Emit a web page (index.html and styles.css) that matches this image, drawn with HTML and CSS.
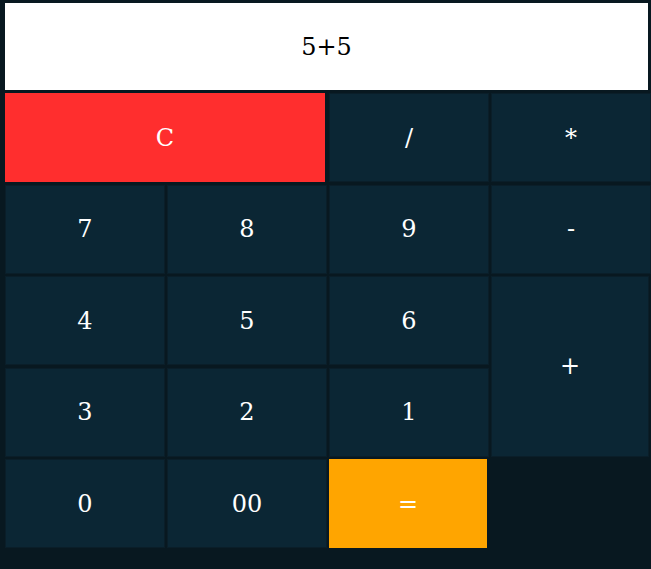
FILE: index.html
```html
<!DOCTYPE html>
<html>
<head>
<meta charset="utf-8">
<link rel="stylesheet" href="styles.css">
</head>
<body>
<div class="calc">
  <div class="display">5+5</div>
  <div class="keys">
    <div class="key clear span2">C</div>
    <div class="key">/</div>
    <div class="key">*</div>
    <div class="key">7</div>
    <div class="key">8</div>
    <div class="key">9</div>
    <div class="key">-</div>
    <div class="key">4</div>
    <div class="key">5</div>
    <div class="key">6</div>
    <div class="key plus">+</div>
    <div class="key">3</div>
    <div class="key">2</div>
    <div class="key">1</div>
    <div class="key">0</div>
    <div class="key">00</div>
    <div class="key equals">=</div>
  </div>
</div>
</body>
</html>
```
FILE: styles.css
```css
html, body {
  margin: 0;
  padding: 0;
  background: #081820;
  height: 100%;
}
.calc {
  padding: 3px 0 0 5px;
  font-family: "DejaVu Serif", serif;
  font-size: 24px;
}
.display {
  background: #ffffff;
  color: #000000;
  height: 87px;
  margin-right: 3px;
  display: flex;
  align-items: center;
  justify-content: center;
}
.keys {
  margin-top: 3px;
  display: grid;
  grid-template-columns: repeat(4, 160px);
  grid-auto-rows: 89px;
  gap: 2.5px 2px;
}
.key {
  background: #0b2634;
  color: #ffffff;
  display: flex;
  align-items: center;
  justify-content: center;
  box-shadow: inset 0 0 0 1px #0a1e29;
}
.span2 { grid-column: span 2; margin-right: 2px; }
.clear { background: #ff2e2e; box-shadow: none; }
.plus { grid-row: span 2; margin-right: 2px; }
.equals { background: #ffa500; box-shadow: none; margin-right: 2px; }
.key:nth-child(2), .key:nth-child(3), .key:nth-child(7) { }
```
